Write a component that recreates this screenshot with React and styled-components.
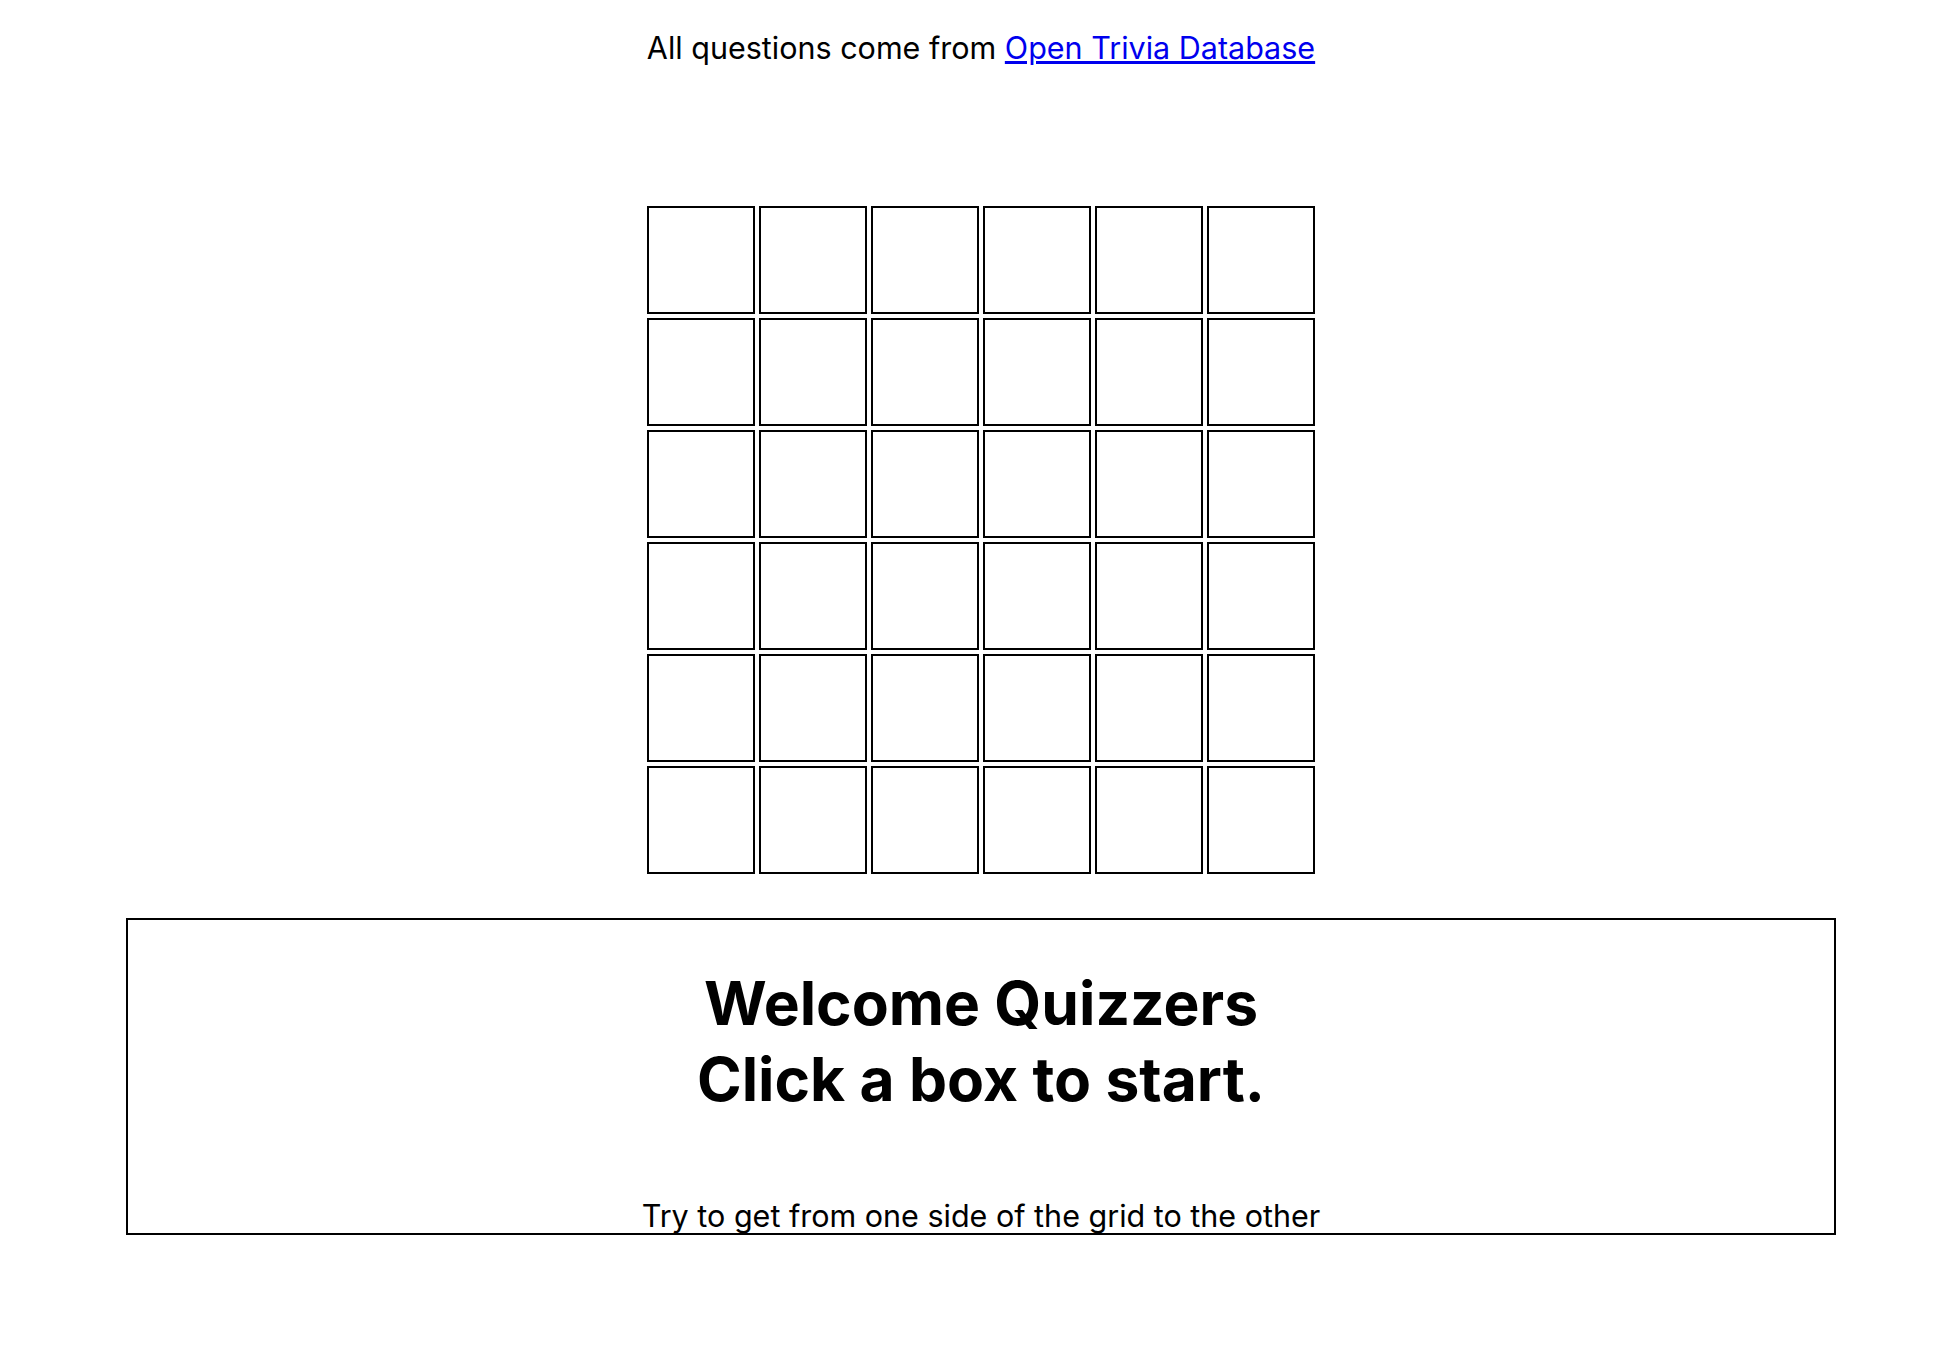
import React from "react";
import styled, { createGlobalStyle } from "styled-components";

const Global = createGlobalStyle`
  html, body { background: #fff; }
  body {
    margin: 0 0 0 10px;
    font-family: Inter, "Noto Sans", "Liberation Sans", sans-serif;
    color: #000;
  }
`;

const Page = styled.main`
  display: flex;
  flex-direction: column;
  align-items: center;
  padding-top: 30px;
`;

const Credit = styled.p`
  margin: 0;
  font-size: 30.5px;
  line-height: 36px;
  text-align: center;
`;

const Link = styled.a`
  color: #0000ee;
  text-decoration: underline;
`;

const Board = styled.div`
  margin-top: 138px;
  display: grid;
  grid-template-columns: repeat(6, 108px);
  grid-auto-rows: 108px;
  gap: 4px;
  padding: 2px;
`;

const Cell = styled.button`
  box-sizing: border-box;
  width: 108px;
  height: 108px;
  margin: 0;
  padding: 0;
  background: #fff;
  border: 2px solid #000;
  cursor: pointer;
`;

const Panel = styled.section`
  box-sizing: border-box;
  margin-top: 42px;
  width: 1710px;
  height: 317px;
  border: 2px solid #000;
  display: flex;
  flex-direction: column;
  align-items: center;
  justify-content: space-between;
  padding-top: 45px;
`;

const Title = styled.h1`
  margin: 0;
  font-size: 60.5px;
  line-height: 76px;
  font-weight: 700;
  text-align: center;
`;

const Hint = styled.p`
  margin: 0;
  font-size: 30.5px;
  line-height: 34px;
  text-align: center;
`;

export default function App() {
  const cells = Array.from({ length: 36 }, (_, i) => i);
  return (
    <>
      <Global />
      <Page>
        <Credit>
          All questions come from <Link href="#">Open Trivia Database</Link>
        </Credit>
        <Board>
          {cells.map((i) => (
            <Cell key={i} aria-label={`box ${i + 1}`} />
          ))}
        </Board>
        <Panel>
          <Title>
            Welcome Quizzers
            <br />
            Click a box to start.
          </Title>
          <Hint>Try to get from one side of the grid to the other</Hint>
        </Panel>
      </Page>
    </>
  );
}
